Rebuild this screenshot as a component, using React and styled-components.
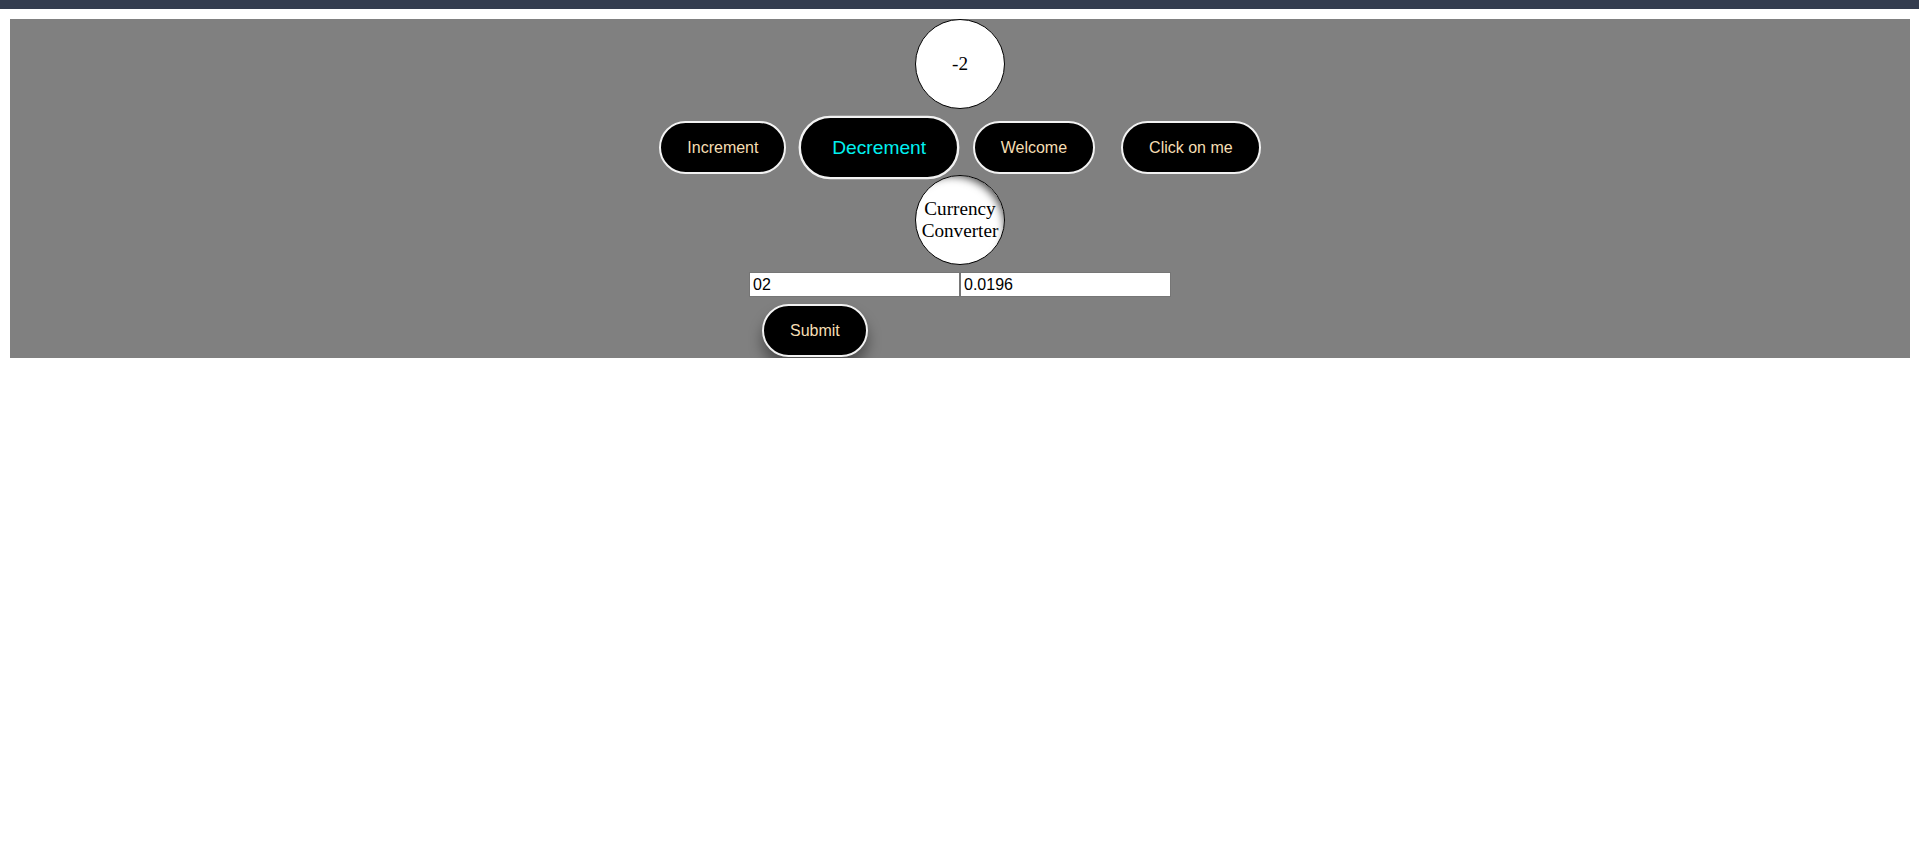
import React from "react";
import styled, { createGlobalStyle } from "styled-components";

const GlobalStyle = createGlobalStyle`
  html, body {
    margin: 0;
    padding: 0;
    background: #ffffff;
    font-family: "Liberation Serif", "Times New Roman", serif;
  }
`;

const TopBar = styled.div`
  height: 9px;
  background: #343d4f;
`;

const Panel = styled.main`
  margin: 10px 9px 0 10px;
  background: #808080;
  display: flex;
  flex-direction: column;
  align-items: center;
  padding-bottom: 1px;
`;

const Bubble = styled.div`
  width: 88px;
  height: 88px;
  border: 1px solid #000;
  border-radius: 50%;
  background: #fff;
  display: flex;
  align-items: center;
  justify-content: center;
  text-align: center;
  font-family: "Liberation Serif", "Times New Roman", serif;
  font-size: 19.2px;
  line-height: 22px;
  color: #000;
  box-shadow: ${(p) => (p.$shaded ? "inset -8px 9px 9px -9px rgba(0,0,0,0.7)" : "none")};
`;

const ButtonRow = styled.div`
  display: flex;
  align-items: center;
  gap: 26px;
  padding: 12px 0 1px;
`;

const PillButton = styled.button`
  background: #000;
  color: ${(p) => (p.$active ? "#00f0f0" : "#f5deb3")};
  border: 2px solid #f2f2f2;
  border-radius: 30px;
  padding: 15px 26px;
  font-family: "Liberation Sans", Arial, sans-serif;
  font-size: 16px;
  line-height: 19px;
  cursor: pointer;
  transform: ${(p) => (p.$active ? "scale(1.2)" : "none")};
  box-shadow: ${(p) => (p.$raised ? "0 10px 14px rgba(0,0,0,0.4)" : "none")};
`;

const Converter = styled.form`
  display: flex;
  flex-direction: column;
  align-items: flex-start;
  margin-top: 7px;
`;

const InputRow = styled.div`
  display: flex;
  gap: 0;
`;

const Field = styled.input`
  width: 211px;
  height: 25px;
  box-sizing: border-box;
  border: 1px solid #767676;
  background: #fff;
  padding: 0 3px;
  font-family: "Liberation Sans", Arial, sans-serif;
  font-size: 16px;
  color: #000;
  outline: none;
`;

const SubmitButton = styled(PillButton)`
  margin: 7px 0 0 13px;
`;

export default function App() {
  return (
    <>
      <GlobalStyle />
      <TopBar />
      <Panel>
        <Bubble>-2</Bubble>
        <ButtonRow>
          <PillButton type="button">Increment</PillButton>
          <PillButton type="button" $active>
            Decrement
          </PillButton>
          <PillButton type="button">Welcome</PillButton>
          <PillButton type="button">Click on me</PillButton>
        </ButtonRow>
        <Bubble $shaded>Currency Converter</Bubble>
        <Converter onSubmit={(e) => e.preventDefault()}>
          <InputRow>
            <Field defaultValue="02" />
            <Field defaultValue="0.0196" />
          </InputRow>
          <SubmitButton type="submit" $raised>
            Submit
          </SubmitButton>
        </Converter>
      </Panel>
    </>
  );
}
